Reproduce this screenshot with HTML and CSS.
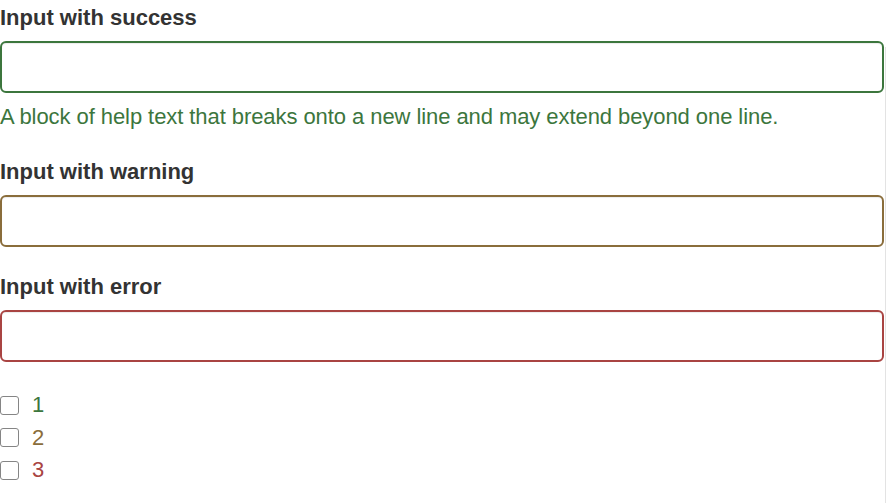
FILE: index.html
```html
<!DOCTYPE html>
<html lang="en">
<head>
<meta charset="utf-8">
<title>Validation states</title>
<link rel="stylesheet" href="styles.css">
</head>
<body>
<form class="form">
  <div class="form-group has-success">
    <label class="field-label" for="inputSuccess">Input with success</label>
    <input type="text" class="form-control" id="inputSuccess">
    <span class="help-block">A block of help text that breaks onto a new line and may extend beyond one line.</span>
  </div>
  <div class="form-group has-warning">
    <label class="field-label" for="inputWarning">Input with warning</label>
    <input type="text" class="form-control" id="inputWarning">
  </div>
  <div class="form-group has-error">
    <label class="field-label" for="inputError">Input with error</label>
    <input type="text" class="form-control" id="inputError">
  </div>
  <div class="checks">
    <label class="checkbox has-success"><input type="checkbox" class="check-input"><span>1</span></label>
    <label class="checkbox has-warning"><input type="checkbox" class="check-input"><span>2</span></label>
    <label class="checkbox has-error"><input type="checkbox" class="check-input"><span>3</span></label>
  </div>
</form>
<div class="scroll-edge"></div>
</body>
</html>
```

FILE: styles.css
```css
html, body {
  margin: 0;
  padding: 0;
  background: #fff;
}

body {
  font-family: "Liberation Sans", Arial, Helvetica, sans-serif;
  font-size: 22px;
  line-height: 30px;
  color: #333;
}

.form {
  width: 884px;
  padding-top: 3px;
}

.form-group {
  display: flex;
  flex-direction: column;
  margin-bottom: 25px;
}

.field-label {
  display: block;
  font-weight: 700;
  margin-bottom: 8px;
}

.form-control {
  box-sizing: border-box;
  display: block;
  width: 100%;
  height: 52px;
  margin: 0;
  padding: 9px 18px;
  font: inherit;
  background: #fff;
  border: 2px solid #ccc;
  border-radius: 6px;
  box-shadow: inset 0 1px 1px rgba(0, 0, 0, 0.075);
  outline: none;
}

.help-block {
  display: block;
  margin-top: 9px;
  margin-bottom: 0;
  letter-spacing: -0.07px;
}

.has-success .form-control { border-color: #3c763d; }
.has-warning .form-control { border-color: #8a6d3b; }
.has-error .form-control { border-color: #a94442; }

.has-success .help-block,
.checkbox.has-success { color: #3c763d; }
.checkbox.has-warning { color: #8a6d3b; }
.checkbox.has-error { color: #a94442; }

.checks {
  display: flex;
  flex-direction: column;
  gap: 2.5px;
  padding-top: 3px;
}

.checkbox {
  display: flex;
  align-items: center;
  gap: 13px;
  height: 30px;
}

.check-input {
  -webkit-appearance: none;
  appearance: none;
  box-sizing: border-box;
  width: 19px;
  height: 19px;
  margin: 0;
  border: 1px solid #858585;
  border-radius: 3px;
  background: #fff;
}

.scroll-edge {
  position: fixed;
  top: 47px;
  right: 1px;
  bottom: 0;
  width: 1px;
  background: #e3e3e3;
}
```
